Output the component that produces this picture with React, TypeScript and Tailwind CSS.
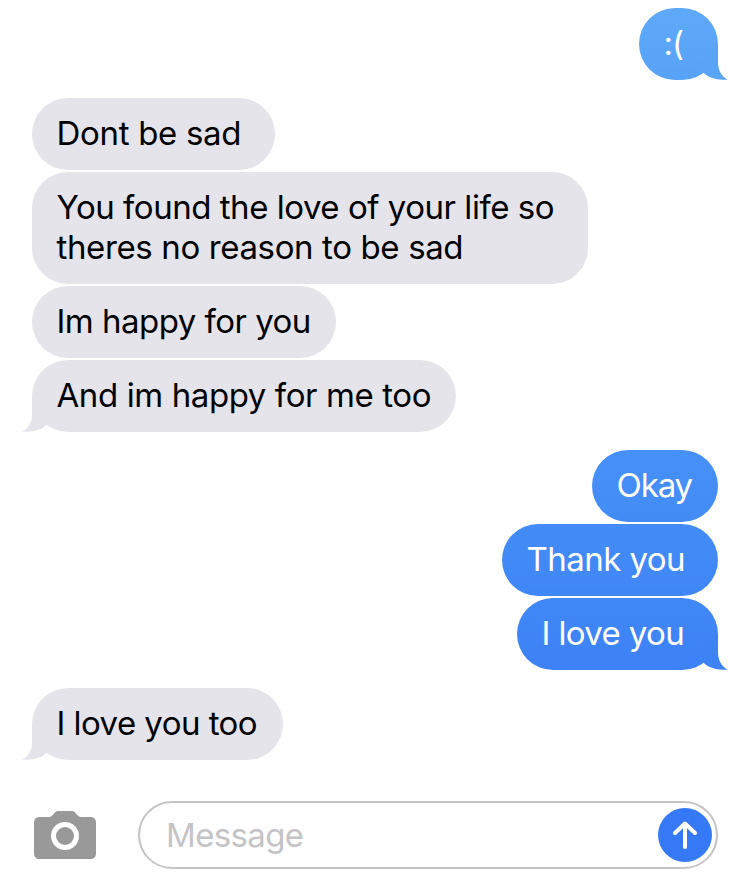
import clsx from "clsx";

type Line = {
  text: string;
  className: string;
};

type Message = {
  lines: Line[];
  className: string;
  tail?: boolean;
};

type Group = {
  sent?: boolean;
  messages: Message[];
};

const groups: Group[] = [
  {
    sent: true,
    messages: [
      {
        lines: [{ text: ":(", className: "tracking-[-1px]" }],
        className: "w-[79px] from-[#5eaaf8] to-[#58a2f7] text-[#5aa4f7]",
        tail: true,
      },
    ],
  },
  {
    messages: [
      {
        lines: [{ text: "Dont be sad", className: "tracking-[-0.3px]" }],
        className: "w-[243px]",
      },
      {
        lines: [
          {
            text: "You found the love of your life so",
            className: "tracking-[-0.47px]",
          },
          {
            text: "theres no reason to be sad",
            className: "tracking-[-0.37px]",
          },
        ],
        className: "w-[556px]",
      },
      {
        lines: [{ text: "Im happy for you", className: "tracking-[-0.52px]" }],
        className: "w-[304px]",
      },
      {
        lines: [
          { text: "And im happy for me too", className: "tracking-[-0.4px]" },
        ],
        className: "w-[424px]",
        tail: true,
      },
    ],
  },
  {
    sent: true,
    messages: [
      {
        lines: [{ text: "Okay", className: "tracking-[-1.1px]" }],
        className: "w-[126px] from-[#4690f7] to-[#438cf6]",
      },
      {
        lines: [{ text: "Thank you", className: "tracking-[-0.55px]" }],
        className: "w-[216px] from-[#438cf6] to-[#4087f6]",
      },
      {
        lines: [{ text: "I love you", className: "tracking-[-0.63px]" }],
        className: "w-[201px] from-[#4087f6] to-[#3c82f6] text-[#3d83f6]",
        tail: true,
      },
    ],
  },
  {
    messages: [
      {
        lines: [{ text: "I love you too", className: "tracking-[-0.55px]" }],
        className: "w-[251px]",
        tail: true,
      },
    ],
  },
];

const Tail = ({ sent }: { sent?: boolean }) => (
  <svg
    viewBox="0 0 36 36"
    className={clsx(
      "absolute bottom-0 h-9 w-9",
      sent ? "-right-[10px]" : "-left-[10px] -scale-x-100",
    )}
    fill="currentColor"
  >
    <path d="M26 0V19C26.300 27 30 32.500 35.800 35.800C28 36 18 35.200 11.500 28.700L6 24Z" />
  </svg>
);

const Bubble = ({ message, sent }: { message: Message; sent?: boolean }) => (
  <div
    className={clsx(
      "relative rounded-[36px] pt-[15px] pb-[17px] pl-[24.5px]",
      sent ? "bg-linear-to-b" : "bg-[#e5e4ea] text-[#e5e4ea]",
      message.className,
    )}
  >
    {message.tail && <Tail sent={sent} />}
    <p
      className={clsx(
        "relative text-[33px] leading-10 whitespace-nowrap",
        sent ? "text-white" : "text-black",
      )}
    >
      {message.lines.map((line) => (
        <span key={line.text} className={clsx("block", line.className)}>
          {line.text}
        </span>
      ))}
    </p>
  </div>
);

const CameraIcon = () => (
  <svg viewBox="0 0 62 48" className="h-12 w-[62px]">
    <path
      fill="#999999"
      d="M6 6H15C17 6 18 5 19 3.800L20.500 2C21.700 .6 22.700 0 24.500 0H37.500C39.300 0 40.300 .6 41.500 2L43 3.800C44 5 45 6 47 6H56C60 6 62 8 62 12V42C62 46 60 48 56 48H6C2 48 0 46 0 42V12C0 8 2 6 6 6Z"
    />
    <circle cx="31" cy="25" r="11.500" fill="none" stroke="#fff" strokeWidth="5" />
  </svg>
);

const Composer = () => (
  <div className="mt-[41px] flex items-center pl-[2px]">
    <CameraIcon />
    <div className="ml-[42px] flex h-[68px] w-[580px] items-center justify-between rounded-full border-2 border-[#c4c3c6] pr-1 pl-[26px]">
      <span className="text-[33px] leading-10 tracking-[-0.65px] text-[#c4c4c7]">
        Message
      </span>
      <button
        aria-label="Send"
        className="flex h-[54px] w-[54px] items-center justify-center rounded-full bg-[#3579f6]"
      >
        <svg
          viewBox="0 0 54 54"
          className="h-[54px] w-[54px]"
          fill="none"
          stroke="#fff"
          strokeWidth="4"
          strokeLinecap="round"
          strokeLinejoin="round"
        >
          <path d="M27 39V15.500M17 25L27 15.500L37 25" />
        </svg>
      </button>
    </div>
  </div>
);

export default function App() {
  return (
    <main className="h-[879px] w-[750px] overflow-hidden bg-white px-8 pt-2 font-['Inter',sans-serif]">
      <div className="flex flex-col gap-[18px]">
        {groups.map((group, index) => (
          <section
            key={index}
            className={clsx(
              "flex flex-col gap-[2px]",
              group.sent ? "items-end" : "items-start",
            )}
          >
            {group.messages.map((message) => (
              <Bubble
                key={message.lines[0].text}
                message={message}
                sent={group.sent}
              />
            ))}
          </section>
        ))}
      </div>
      <Composer />
    </main>
  );
}
